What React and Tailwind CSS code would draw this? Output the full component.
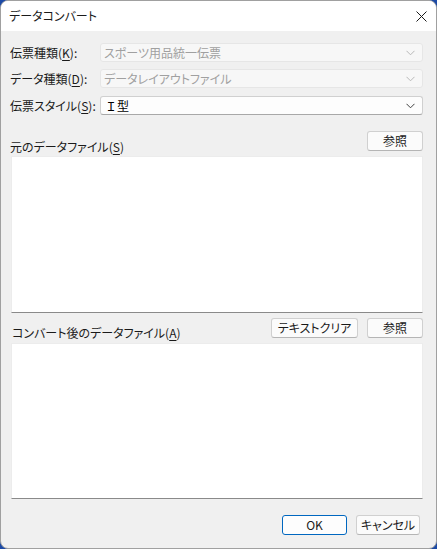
import React from "react";

const font = {
  fontFamily: '"Noto Sans CJK JP", "Noto Sans", sans-serif',
};

function Chevron({ color }) {
  return (
    <svg width="9" height="6" viewBox="0 0 9 6" className="shrink-0">
      <polyline points="0.5,0.8 4.5,4.8 8.5,0.8" fill="none" stroke={color} strokeWidth="1" />
    </svg>
  );
}

function Combo({ value, disabled, plain }) {
  return (
    <div
      className={
        "flex-1 h-[19px] flex items-center justify-between pl-[3px] pr-[7px] rounded-[3px] border " +
        (disabled
          ? "bg-[#f7f7f7] border-[#e6e6e6] text-[#a0a0a0]"
          : "bg-[#fdfdfd] border-[#d0d0d0] border-b-[#a8a8a8] text-black")
      }
    >
      <span className={"leading-none " + (plain ? "[font-feature-settings:normal] ml-[1px]" : "")}>{value}</span>
      <Chevron color={disabled ? "#b8b8b8" : "#404040"} />
    </div>
  );
}

function Row({ label, hot, value, disabled, plain, top }) {
  return (
    <div className={"flex items-center " + top}>
      <div className="w-[90px] leading-none">
        {label[0]}(<span className="underline underline-offset-2">{hot}</span>){label[1]}
      </div>
      <Combo value={value} disabled={disabled} plain={plain} />
    </div>
  );
}

function Btn({ children, w, primary }) {
  return (
    <div
      className={
        "h-[20px] flex items-center justify-center rounded-[3px] leading-none " +
        w +
        (primary
          ? " border-[1.5px] border-[#0067c0] bg-[#fdfdfd]"
          : " border border-[#d0d0d0] border-b-[#b5b5b5] bg-[#fbfbfb]")
      }
    >
      {children}
    </div>
  );
}

function TextBox({ h }) {
  return (
    <div className={"bg-white border border-[#ececec] border-b-[#8a8a8a] ml-[1px] " + h}></div>
  );
}

export default function App() {
  return (
    <div className="w-[437px] h-[549px] bg-[#1c4aa6] overflow-hidden">
      <div
        className="w-[437px] h-[549px] rounded-[8px] border border-[#a0a0a0] bg-[#f0f0f0] overflow-hidden flex flex-col text-[12px] text-[#1a1a1a] [font-feature-settings:'palt']"
        style={font}
      >
        {/* TITLE BAR */}
        <div className="h-[30px] bg-white flex items-center justify-between pl-[8px] pr-[9px] shrink-0">
          <span className="leading-none">データコンバート</span>
          <svg width="11" height="11" viewBox="0 0 11 11">
            <path d="M0.5 0.5 L10.5 10.5 M10.5 0.5 L0.5 10.5" stroke="#1a1a1a" strokeWidth="1" />
          </svg>
        </div>

        {/* BODY */}
        <div className="flex flex-col pl-[9px] pr-[13px]">
          <Row label={["伝票種類", ":"]} hot="K" value="スポーツ用品統一伝票" disabled top="mt-[12px]" />
          <Row label={["データ種類", ":"]} hot="D" value="データレイアウトファイル" disabled top="mt-[7px]" />
          <Row label={["伝票スタイル", ":"]} hot="S" value="Ｉ型" plain top="mt-[8px]" />

          {/* SOURCE FILE */}
          <div className="flex items-end justify-between mt-[16px]">
            <span className="leading-none mb-[-2px]">
              元のデータファイル(<span className="underline underline-offset-2">S</span>)
            </span>
            <Btn w="w-[56px]">参照</Btn>
          </div>
          <div className="mt-[5px]">
            <TextBox h="h-[157px]" />
          </div>

          {/* DEST FILE */}
          <div className="flex items-end mt-[5px]">
            <span className="flex-1 leading-none mb-[-1px] ml-[2px]">
              コンバート後のデータファイル(<span className="underline underline-offset-2">A</span>)
            </span>
            <Btn w="w-[87px]">テキストクリア</Btn>
            <div className="w-[9px]"></div>
            <Btn w="w-[56px]">参照</Btn>
          </div>
          <div className="mt-[5px]">
            <TextBox h="h-[156px]" />
          </div>

          {/* FOOTER */}
          <div className="flex justify-end gap-[9px] mt-[16px] pr-[3px]">
            <Btn w="w-[65px]" primary>OK</Btn>
            <Btn w="w-[64px]">キャンセル</Btn>
          </div>
        </div>
      </div>
    </div>
  );
}
